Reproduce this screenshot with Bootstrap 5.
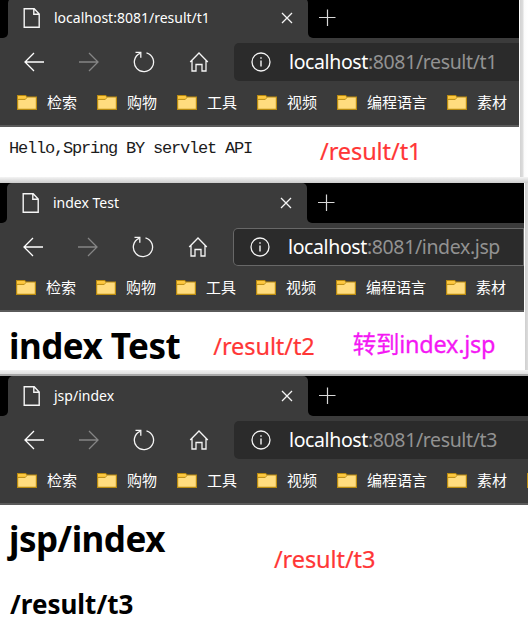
<!DOCTYPE html>
<html lang="zh-CN">
<head>
<meta charset="utf-8">
<title>Spring result</title>
<link href="https://cdn.jsdelivr.net/npm/bootstrap@5.3.0/dist/css/bootstrap.min.css" rel="stylesheet">
<style>
body{font-family:"Noto Sans","Noto Sans CJK SC",sans-serif;width:528px;height:626px;line-height:1;color:#000}
svg{display:block;flex:none}
.win{overflow:hidden}
.win1{width:519px;height:177px}
.win2{width:524px;height:187px}
.stage1{height:183px;background:linear-gradient(#f4f4f4,#ccc) bottom/100% 6px no-repeat,linear-gradient(90deg,#fff 1px,#d2d2d2 1px,#dedede 4px,#fbfbfb 5px,#fff) right/9px 100% no-repeat}
.stage2{height:193px;background:linear-gradient(#f2f2f2 0,#e0e0e0 4px,#a8a8a8 4px,#a8a8a8) bottom/100% 6px no-repeat,linear-gradient(90deg,#fff 1px,#cfcfcf 1px,#dcdcdc) right/4px 100% no-repeat}
.chrome{height:129px;background:#3b3b3b;border-bottom:2px solid #5a5a5a;color:#fff}
.win1 .chrome{margin-top:-2px}
.shift{margin-left:-1px}
.strip{height:40px}
.edge{width:8px;background:#000;border-radius:0 0 5px 0}
.tabwrap{background:linear-gradient(#000 8px,#3b3b3b 8px)}
.tabx{width:300px;background:#3b3b3b;padding:0 15px;font-size:14px;border-radius:5px 5px 0 0}
.tt{width:215px;margin-left:13px;white-space:nowrap}
.rest{background:#000;border-radius:0 0 0 5px;padding-left:10px}
.bar{height:48px;padding:5px 0 5px 24px}
.bar>svg:nth-child(2){margin-left:35px}
.bar>svg:nth-child(3),.bar>svg:nth-child(4){margin-left:34px}
.addr{height:38px;background:#2b2b2b;border-radius:5px 0 0 5px;margin-left:25px;padding-left:17px;font-size:19.5px}
.focused{box-shadow:inset 0 0 0 1px #686868}
.url{margin-left:18px;white-space:nowrap;letter-spacing:-.38px}
.rest-url{color:#929292}
.marks{height:33px;padding-left:17px;font:15px "Noto Sans CJK SC",sans-serif;white-space:nowrap;gap:20px}
.mk{gap:10px}
.mk span{line-height:32px;margin-top:-2px}
.note{color:#ff3636;font-size:23.5px;white-space:nowrap;letter-spacing:-.08px;-webkit-text-stroke:.2px currentColor}
.pink{color:#f418f4;letter-spacing:-.25px;-webkit-text-stroke:.3px #f418f4}
.hello{font:17px/20px "Liberation Mono",monospace;letter-spacing:-1.2px;white-space:nowrap;width:310px;padding:4px 0 0 9px;color:#1c1c1c}
.n1{padding:5px 0 0 10px}
.n2{padding:7px 0 0 33px}
.n3{padding:5px 0 0 38px}
.n4{padding:27px 0 0 109px}
.big{font-size:35px;font-weight:700;white-space:nowrap;letter-spacing:-.5px}
.mid{font-size:26px;font-weight:700;padding:35px 0 8px 1px}
.body{padding:16px 0 0 9px}
</style>
<script src="https://cdn.jsdelivr.net/npm/bootstrap@5.3.0/dist/js/bootstrap.bundle.min.js"></script>
</head>
<body class="bg-white overflow-hidden">
<svg width="0" height="0" class="position-absolute" fill="none">
<symbol id="page" viewBox="0 0 18 20"><path d="M1.2.8h10L16.2 6v13.2h-15zM10.8 1v5.2h5" stroke="#f5f5f5" stroke-width="1.4" fill="none"/></symbol>
<symbol id="back" viewBox="0 0 20 20"><path d="M20 10H1M10 1 1 10l9 9" stroke="currentColor" stroke-width="1.3" fill="none"/></symbol>
<symbol id="fwd" viewBox="0 0 20 20"><path d="M0 10h19M10 1l9 9-9 9" stroke="#858585" stroke-width="1.3" fill="none"/></symbol>
<symbol id="reload" viewBox="0 0 22 22"><path d="M13.5 1.8A9.6 9.6 0 1 1 7 2.3M2.5 1.3h5.3v5.5" stroke="#f5f5f5" stroke-width="1.3" fill="none"/></symbol>
<symbol id="home" viewBox="0 0 20 20"><path d="M1.2 10 10 1l8.800 9M3 8.500V19h4v-6.500h6V19h4V8.500" stroke="#f5f5f5" stroke-width="1.3" fill="none"/></symbol>
<symbol id="info" viewBox="0 0 20 20"><circle cx="10" cy="10" r="9" stroke="#f5f5f5" stroke-width="1.3" fill="none"/><path d="M10 8.500v6M10 5.300v1.500" stroke="#f5f5f5" stroke-width="1.4"/></symbol>
<symbol id="cross" viewBox="0 0 12 12"><path d="m1 1 10 10M11 1 1 11" stroke="#f5f5f5" stroke-width="1.3"/></symbol>
<symbol id="plus" viewBox="0 0 18 18"><path d="M1 8.500h16.500M9.500.5V17" stroke="#d8d8d8" stroke-width="1.2"/></symbol>
<symbol id="folder" viewBox="0 0 20 15"><path d="M.6.6h7.900l1.500 1.400h9.400v12.400H.6z" fill="#ffdc7e" stroke="#b98a10" stroke-width="1.2"/><path d="M1.200 1.200h7l.9 1-1.300 1.700H1.200z" fill="#ffc83d"/><path d="M1 4.400h7.300L10 2.300" fill="none" stroke="#b98a10"/></symbol>
</svg>

<section class="stage1"><div class="win win1 bg-white">
<header class="chrome">
<div class="strip d-flex"><i class="edge"></i><div class="tabwrap"><div class="tabx h-100 d-flex align-items-center"><svg width="18" height="20"><use href="#page"/></svg><span class="tt">localhost:8081/result/t1</span><svg class="ms-auto" width="12" height="12"><use href="#cross"/></svg></div></div><div class="rest flex-fill d-flex align-items-center"><svg width="18" height="18"><use href="#plus"/></svg></div></div>
<div class="bar d-flex align-items-center"><svg width="20" height="20"><use href="#back"/></svg><svg width="20" height="20"><use href="#fwd"/></svg><svg width="22" height="22"><use href="#reload"/></svg><svg width="20" height="20"><use href="#home"/></svg><div class="addr flex-fill d-flex align-items-center"><svg width="20" height="20"><use href="#info"/></svg><span class="url">localhost<span class="rest-url">:8081/result/t1</span></span></div></div>
<nav class="marks d-flex align-items-center"><div class="mk d-flex align-items-center"><svg width="20" height="15"><use href="#folder"/></svg><span>检索</span></div><div class="mk d-flex align-items-center"><svg width="20" height="15"><use href="#folder"/></svg><span>购物</span></div><div class="mk d-flex align-items-center"><svg width="20" height="15"><use href="#folder"/></svg><span>工具</span></div><div class="mk d-flex align-items-center"><svg width="20" height="15"><use href="#folder"/></svg><span>视频</span></div><div class="mk d-flex align-items-center"><svg width="20" height="15"><use href="#folder"/></svg><span>编程语言</span></div><div class="mk d-flex align-items-center"><svg width="20" height="15"><use href="#folder"/></svg><span>素材</span></div></nav>
</header>
<main class="d-flex pt-2"><div class="hello">Hello,Spring BY servlet API</div><div class="note n1">/result/t1</div></main>
</div></section>

<section class="stage2"><div class="win win2 bg-white">
<header class="chrome"><div class="shift">
<div class="strip d-flex"><i class="edge"></i><div class="tabwrap"><div class="tabx h-100 d-flex align-items-center"><svg width="18" height="20"><use href="#page"/></svg><span class="tt">index Test</span><svg class="ms-auto" width="12" height="12"><use href="#cross"/></svg></div></div><div class="rest flex-fill d-flex align-items-center"><svg width="18" height="18"><use href="#plus"/></svg></div></div>
<div class="bar d-flex align-items-center"><svg width="20" height="20"><use href="#back"/></svg><svg width="20" height="20"><use href="#fwd"/></svg><svg width="22" height="22"><use href="#reload"/></svg><svg width="20" height="20"><use href="#home"/></svg><div class="addr focused flex-fill d-flex align-items-center"><svg width="20" height="20"><use href="#info"/></svg><span class="url">localhost<span class="rest-url">:8081/index.jsp</span></span></div></div>
<nav class="marks d-flex align-items-center"><div class="mk d-flex align-items-center"><svg width="20" height="15"><use href="#folder"/></svg><span>检索</span></div><div class="mk d-flex align-items-center"><svg width="20" height="15"><use href="#folder"/></svg><span>购物</span></div><div class="mk d-flex align-items-center"><svg width="20" height="15"><use href="#folder"/></svg><span>工具</span></div><div class="mk d-flex align-items-center"><svg width="20" height="15"><use href="#folder"/></svg><span>视频</span></div><div class="mk d-flex align-items-center"><svg width="20" height="15"><use href="#folder"/></svg><span>编程语言</span></div><div class="mk d-flex align-items-center"><svg width="20" height="15"><use href="#folder"/></svg><span>素材</span></div></nav>
</div></header>
<main class="body d-flex"><div class="big">index Test</div><div class="note n2">/result/t2</div><div class="note pink n3">转到index.jsp</div></main>
</div></section>

<section>
<header class="chrome overflow-hidden">
<div class="strip d-flex"><i class="edge"></i><div class="tabwrap"><div class="tabx h-100 d-flex align-items-center"><svg width="18" height="20"><use href="#page"/></svg><span class="tt">jsp/index</span><svg class="ms-auto" width="12" height="12"><use href="#cross"/></svg></div></div><div class="rest flex-fill d-flex align-items-center"><svg width="18" height="18"><use href="#plus"/></svg></div></div>
<div class="bar d-flex align-items-center"><svg width="20" height="20"><use href="#back"/></svg><svg width="20" height="20"><use href="#fwd"/></svg><svg width="22" height="22"><use href="#reload"/></svg><svg width="20" height="20"><use href="#home"/></svg><div class="addr flex-fill d-flex align-items-center"><svg width="20" height="20"><use href="#info"/></svg><span class="url">localhost<span class="rest-url">:8081/result/t3</span></span></div></div>
<nav class="marks d-flex align-items-center"><div class="mk d-flex align-items-center"><svg width="20" height="15"><use href="#folder"/></svg><span>检索</span></div><div class="mk d-flex align-items-center"><svg width="20" height="15"><use href="#folder"/></svg><span>购物</span></div><div class="mk d-flex align-items-center"><svg width="20" height="15"><use href="#folder"/></svg><span>工具</span></div><div class="mk d-flex align-items-center"><svg width="20" height="15"><use href="#folder"/></svg><span>视频</span></div><div class="mk d-flex align-items-center"><svg width="20" height="15"><use href="#folder"/></svg><span>编程语言</span></div><div class="mk d-flex align-items-center"><svg width="20" height="15"><use href="#folder"/></svg><span>素材</span></div><div class="mk d-flex align-items-center"><svg width="20" height="15"><use href="#folder"/></svg></div></nav>
</header>
<main class="body d-flex"><div><div class="big">jsp/index</div><div class="mid">/result/t3</div></div><div class="note n4">/result/t3</div></main>
</section>
</body>
</html>
